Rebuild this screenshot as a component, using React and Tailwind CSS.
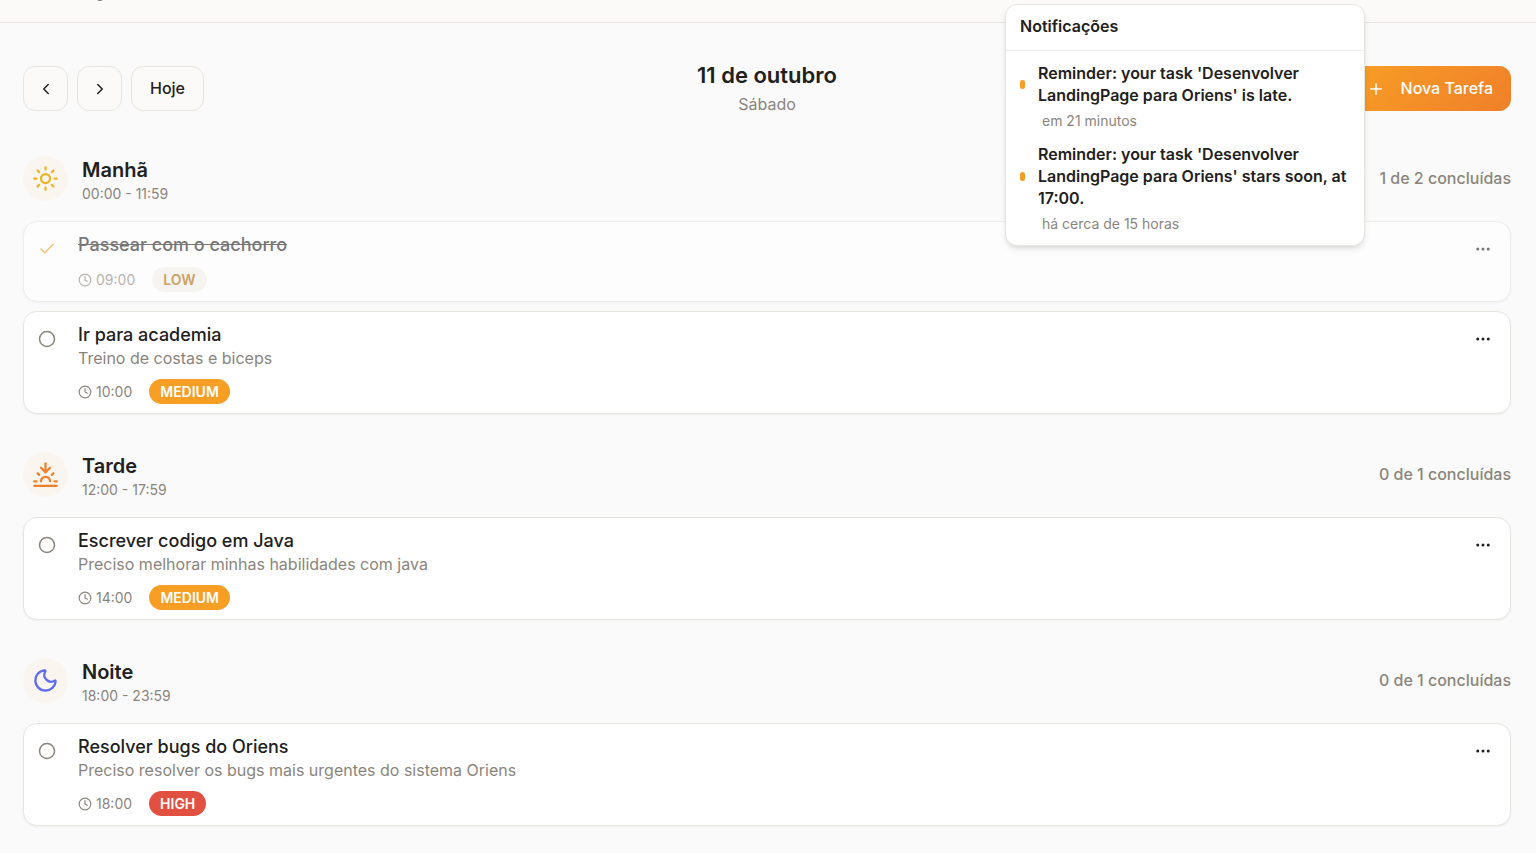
import { Check, ChevronLeft, ChevronRight, Circle, Clock, Ellipsis, Moon, Plus, Sun, Sunset } from "lucide-react";

const notifications = [
  { text: "Reminder: your task 'Desenvolver LandingPage para Oriens' is late.", when: "em 21 minutos" },
  { text: "Reminder: your task 'Desenvolver LandingPage para Oriens' stars soon, at 17:00.", when: "há cerca de 15 horas" },
];

const badgeStyles = {
  LOW: "bg-[#f3f1eb] text-[#ad6800]",
  MEDIUM: "bg-[#f79e24] text-white",
  HIGH: "bg-[#e25041] text-white",
};

const periods = [
  {
    name: "Manhã",
    range: "00:00 - 11:59",
    Icon: Sun,
    color: "text-[#ebb427]",
    summary: "1 de 2 concluídas",
    tasks: [
      { title: "Passear com o cachorro", time: "09:00", priority: "LOW", done: true },
      { title: "Ir para academia", description: "Treino de costas e biceps", time: "10:00", priority: "MEDIUM" },
    ],
  },
  {
    name: "Tarde",
    range: "12:00 - 17:59",
    Icon: Sunset,
    color: "text-[#f07f2a]",
    summary: "0 de 1 concluídas",
    tasks: [
      { title: "Escrever codigo em Java", description: "Preciso melhorar minhas habilidades com java", time: "14:00", priority: "MEDIUM" },
    ],
  },
  {
    name: "Noite",
    range: "18:00 - 23:59",
    Icon: Moon,
    color: "text-[#5f6bf0]",
    summary: "0 de 1 concluídas",
    tasks: [
      { title: "Resolver bugs do Oriens", description: "Preciso resolver os bugs mais urgentes do sistema Oriens", time: "18:00", priority: "HIGH" },
    ],
  },
];

function Notifications() {
  return (
    <aside aria-label="Notificações" className="absolute right-[171px] top-1 z-10 w-[360px] rounded-xl border border-[#e7e5e0] bg-white pb-[11px] shadow-md">
      <h2 className="border-b border-[#f1f0ee] px-[14px] pt-[10px] pb-[13px] text-base leading-[22px] font-semibold">Notificações</h2>
      <ul className="flex flex-col gap-3 px-[14px] pt-[11px]">
        {notifications.map((n) => (
          <li key={n.text}>
            <div className="flex items-center gap-[13px]">
              <span className="h-[9px] w-[5px] shrink-0 rounded-full bg-[#f79e24]" />
              <p className="text-base leading-[22px] font-semibold">{n.text}</p>
            </div>
            <p className="mt-[5px] pl-[22px] text-sm text-[#8a857c]">{n.when}</p>
          </li>
        ))}
      </ul>
    </aside>
  );
}

function Task({ task }) {
  return (
    <li className={`flex items-start rounded-[14px] border border-[#e7e5e0] bg-white pt-[11px] pr-[18px] pb-[9px] pl-[14px] shadow-xs ${task.done ? "opacity-60" : ""}`}>
      <button type="button" aria-label={task.done ? "Reabrir tarefa" : "Concluir tarefa"} className="mt-[7px] shrink-0">
        {task.done ? <Check size={18} className="text-[#f79e24]" /> : <Circle size={18} className="text-[#8a857c]" />}
      </button>
      <div className="ml-[22px] min-w-0 flex-1">
        <h3 className={`text-lg leading-6 font-medium ${task.done ? "line-through" : ""}`}>{task.title}</h3>
        {task.description && <p className="text-base leading-[22px] text-[#8a857c]">{task.description}</p>}
        <div className="mt-[10px] flex items-center gap-[17px]">
          <span className="flex items-center gap-1 text-sm text-[#8a857c]">
            <Clock size={14} />
            {task.time}
          </span>
          <span className={`flex h-[25px] items-center rounded-full px-[11px] text-sm font-semibold ${badgeStyles[task.priority]}`}>{task.priority}</span>
        </div>
      </div>
      <button type="button" aria-label="Mais opções" className="mt-[7px] shrink-0">
        <Ellipsis size={18} />
      </button>
    </li>
  );
}

export default function App() {
  return (
    <div className="relative min-h-screen bg-[#fafafa] pb-[26px] font-['Inter',sans-serif] text-[#21201c]">
      <header className="flex h-[23px] items-start overflow-hidden border-b border-[#e9e4dd] bg-[#fcfaf8] pl-20">
        <p className="-mt-[17px] text-sm text-[#8a857c]">Organize</p>
      </header>
      <Notifications />
      <main className="pt-9 pr-[25px] pl-[23px]">
        <div className="grid grid-cols-[1fr_auto_1fr] items-center">
          <div className="flex gap-[9px]">
            <button type="button" aria-label="Dia anterior" className="flex size-[45px] items-center justify-center rounded-xl border border-[#e7e5e0] bg-[#fcfaf8]">
              <ChevronLeft size={18} />
            </button>
            <button type="button" aria-label="Próximo dia" className="flex size-[45px] items-center justify-center rounded-xl border border-[#e7e5e0] bg-[#fcfaf8]">
              <ChevronRight size={18} />
            </button>
            <button type="button" className="flex h-[45px] items-center rounded-xl border border-[#e7e5e0] bg-[#fcfaf8] px-[18px] pb-[2px] text-base font-medium">Hoje</button>
          </div>
          <div className="text-center">
            <h1 className="text-[22px] leading-8 font-semibold">11 de outubro</h1>
            <p className="text-base leading-[27px] text-[#8a857c]">Sábado</p>
          </div>
          <button type="button" className="flex h-[45px] items-center gap-4 justify-self-end rounded-xl bg-linear-135 from-[#f79e24] to-[#f07f2a] px-[18px] text-base font-medium text-white">
            <Plus size={18} />
            <span className="pb-[2px]">Nova Tarefa</span>
          </button>
        </div>
        <div className="mt-[38px] flex flex-col gap-[38px]">
          {periods.map(({ name, range, Icon, color, summary, tasks }) => (
            <section key={name}>
              <div className="flex items-start gap-[14px]">
                <span className={`flex size-[45px] items-center justify-center rounded-full bg-[#fbf5ef] ${color}`}>
                  <Icon size={27} />
                </span>
                <div className="flex-1">
                  <h2 className="text-xl leading-7 font-semibold">{name}</h2>
                  <p className="text-sm text-[#8a857c]">{range}</p>
                </div>
                <p className="text-base leading-[44px] font-medium text-[#8a857c]">{summary}</p>
              </div>
              <ul className="mt-[17px] flex flex-col gap-[9px]">
                {tasks.map((task) => (
                  <Task key={task.title} task={task} />
                ))}
              </ul>
            </section>
          ))}
        </div>
      </main>
    </div>
  );
}
